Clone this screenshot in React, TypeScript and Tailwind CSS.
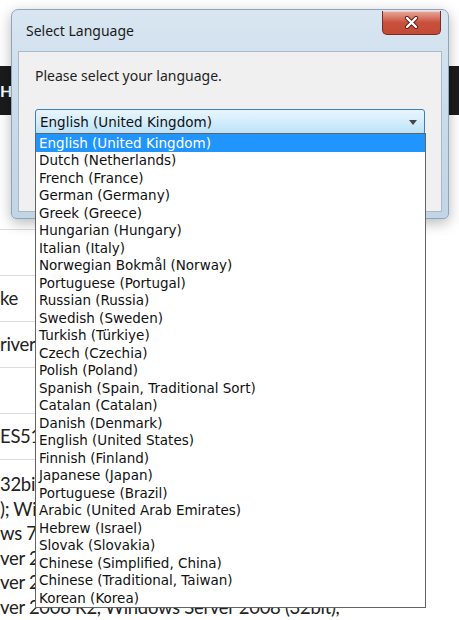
const languages = [
  "English (United Kingdom)",
  "Dutch (Netherlands)",
  "French (France)",
  "German (Germany)",
  "Greek (Greece)",
  "Hungarian (Hungary)",
  "Italian (Italy)",
  "Norwegian Bokmål (Norway)",
  "Portuguese (Portugal)",
  "Russian (Russia)",
  "Swedish (Sweden)",
  "Turkish (Türkiye)",
  "Czech (Czechia)",
  "Polish (Poland)",
  "Spanish (Spain, Traditional Sort)",
  "Catalan (Catalan)",
  "Danish (Denmark)",
  "English (United States)",
  "Finnish (Finland)",
  "Japanese (Japan)",
  "Portuguese (Brazil)",
  "Arabic (United Arab Emirates)",
  "Hebrew (Israel)",
  "Slovak (Slovakia)",
  "Chinese (Simplified, China)",
  "Chinese (Traditional, Taiwan)",
  "Korean (Korea)",
];

const tableRows = ["", "ke", "river", "", "ES51"];

const notes = [
  "32bit",
  "); Windows",
  "ws 7",
  "ver 2008",
  "ver 2008",
  "ver 2008 R2, Windows Server 2008 (32bit),",
];

function PageBehind() {
  return (
    <div className="pt-[66px] font-['Lato','DejaVu_Sans',sans-serif] text-[18.5px] tracking-[-0.3px] text-[#222]">
      <div className="flex h-[49px] items-center bg-[#1b1b1b] text-[16px] font-bold text-white">
        HE
      </div>
      <div className="mt-[114px] w-[300px] border-b border-[#dcdcdc]">
        {tableRows.map((row, i) => (
          <div
            key={i}
            className="flex h-[46px] items-center border-t border-[#dcdcdc]"
          >
            {row}
          </div>
        ))}
      </div>
      <div className="pt-[12px] leading-[24.5px]">
        {notes.map((line, i) => (
          <div key={i} className="whitespace-nowrap">
            {line}
          </div>
        ))}
      </div>
    </div>
  );
}

function CloseButton() {
  return (
    <div className="absolute right-[7px] top-[1px] flex h-[24px] w-[59px] items-center justify-center rounded-b-[5px] border border-t-0 border-[#7a2a22] bg-gradient-to-b from-[#e8a99d] via-[#c9503c] to-[#c34a34] shadow-[inset_0_1px_0_rgba(255,255,255,0.45)]">
      <svg width="15" height="13" viewBox="0 0 15 13">
        <path
          d="M3 2 L12 11 M12 2 L3 11"
          stroke="#5a1e18"
          strokeWidth="4.2"
          strokeLinecap="round"
        />
        <path
          d="M3 2 L12 11 M12 2 L3 11"
          stroke="#ffffff"
          strokeWidth="2.4"
          strokeLinecap="round"
        />
      </svg>
    </div>
  );
}

function LanguageDialog() {
  return (
    <div className="absolute left-[11px] top-[9px] h-[210px] w-[438px] rounded-t-[7px] rounded-b-[5px] border border-[#8ea6bd] bg-gradient-to-b from-[#d9e6f2] via-[#cadbea] to-[#c2d5e6] p-[6px] pt-0 shadow-[0_4px_14px_rgba(0,0,0,0.28)]">
      <div className="flex h-[41px] items-center pl-[8px] font-['Noto_Sans','Open_Sans',sans-serif] text-[14px] text-[#1b1b1b]">
        Select Language
      </div>
      <CloseButton />
      <div className="h-[161px] border border-[#a9b9c8] bg-[#f0f0f0] px-[16px] pt-[12px] font-['Noto_Sans','Open_Sans',sans-serif]">
        <p className="text-[14px] leading-[24px] text-[#1e1e1e]">
          Please select your language.
        </p>
        <div className="mt-[21px] flex h-[26px] w-[390px] items-center justify-between rounded-[3px] border border-[#3c7fbf] bg-gradient-to-b from-[#e9f5fd] via-[#d3edfc] to-[#b9e1f8] pl-[4px] pr-[7px] font-['DejaVu_Sans',sans-serif] text-[13.5px] text-[#111]">
          <span>English (United Kingdom)</span>
          <svg width="8" height="5" viewBox="0 0 8 5">
            <path d="M0 0 L8 0 L4 5 Z" fill="#454545" />
          </svg>
        </div>
      </div>
    </div>
  );
}

function LanguageList() {
  return (
    <ul className="absolute left-[35px] top-[133px] w-[391px] border border-[#646464] bg-white font-['DejaVu_Sans',sans-serif] text-[13.5px] text-[#111]">
      {languages.map((lang, i) => (
        <li
          key={lang}
          className={
            i === 0
              ? "flex h-[17.5px] items-center bg-[#2195ff] pl-[3px] text-white"
              : "flex h-[17.5px] items-center pl-[3px]"
          }
        >
          {lang}
        </li>
      ))}
    </ul>
  );
}

export default function App() {
  return (
    <div className="relative h-[620px] w-[459px] overflow-hidden bg-white">
      <PageBehind />
      <LanguageDialog />
      <LanguageList />
    </div>
  );
}
